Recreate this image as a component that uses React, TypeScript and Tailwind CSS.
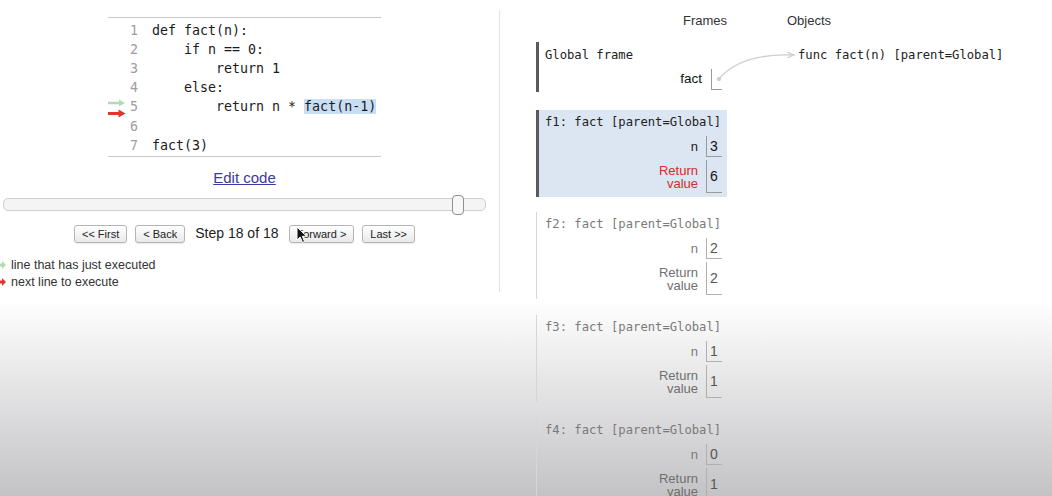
import React from "react"

const mono = "font-['DejaVu_Sans_Mono',monospace]"
const sans = "font-['Liberation_Sans',Arial,sans-serif]"

const code = [
  "def fact(n):",
  "    if n == 0:",
  "        return 1",
  "    else:",
  "        return n * ",
  "",
  "fact(3)",
]

function GreenArrow({ className }: { className?: string }) {
  return (
    <svg width="18" height="8" viewBox="0 0 18 8" className={className}>
      <path d="M0 4 H12" stroke="#b3dbb3" strokeWidth="2.5" />
      <path d="M11 0.5 L17 4 L11 7.5 Z" fill="#b3dbb3" />
    </svg>
  )
}

function RedArrow({ className }: { className?: string }) {
  return (
    <svg width="18" height="9" viewBox="0 0 18 9" className={className}>
      <path d="M0 4.5 H12" stroke="#e3342a" strokeWidth="3" />
      <path d="M10.5 0.5 L17.5 4.5 L10.5 8.5 Z" fill="#e3342a" />
    </svg>
  )
}

function Btn({ children }: { children: React.ReactNode }) {
  return (
    <div className="h-[18px] px-[7px] flex items-center rounded-[3px] border border-[#b5b5b5] bg-[linear-gradient(180deg,#ffffff,#e9e9e9)] text-[11px] text-[#222] shadow-[0_1px_1px_rgba(0,0,0,0.08)]">
      {children}
    </div>
  )
}

type Row = { label: React.ReactNode; value: React.ReactNode; tall?: boolean }

function Frame({
  title,
  rows,
  active,
  muted,
  className,
}: {
  title: string
  rows: Row[]
  active?: boolean
  muted?: boolean
  className?: string
}) {
  const txt = muted ? "text-[#7a7a7a]" : "text-[#222]"
  return (
    <div
      className={`${className ?? ""} ${
        muted ? "border-l border-[#d6d6d6] pl-[8px]" : "border-l-[3px] border-[#5a5a5a] pl-[6px]"
      } ${active ? "bg-[#dbe6f2]" : ""} pt-[4px] pb-[4px] pr-[5px]`}
    >
      <div className={`${mono} text-[12.2px] leading-[16px] whitespace-pre ${txt}`}>{title}</div>
      <div className="flex flex-col items-end gap-[3px] mt-[6px]">
        {rows.map((r, i) => (
          <div key={i} className="flex items-stretch">
            <div
              className={`${sans} text-[13px] leading-[13px] text-right mr-[8px] flex items-center ${
                r.tall ? (active ? "text-[#d52b2b]" : "text-[#6f6f6f]") : txt
              }`}
            >
              {r.label}
            </div>
            <div
              className={`w-[16px] ${r.tall ? "h-[33px]" : "h-[21px]"} border-l border-b ${
                muted ? "border-[#b0b0b0]" : "border-[#9a9a9a]"
              } flex items-center pl-[3px] ${sans} text-[14px] ${muted ? "text-[#555]" : "text-[#111]"}`}
            >
              {r.value}
            </div>
          </div>
        ))}
      </div>
    </div>
  )
}

const retLabel = (
  <span>
    Return
    <br />
    value
  </span>
)

export default function App() {
  return (
    <div className="w-[1052px] h-[496px] overflow-hidden flex bg-[linear-gradient(180deg,#ffffff_0px,#ffffff_300px,#c3c2c5_496px)]">
      {/* left: code + controls */}
      <div className="relative w-[500px] shrink-0 self-start mt-[10px] h-[282px] border-r border-[#e4e4e4]">
        <div className="w-[489px] flex flex-col items-center">
          <div className="w-[273px] mt-[7px] border-t border-b border-[#c8c8c8] pt-[3px] pb-[1px]">
            {code.map((line, i) => (
              <div key={i} className={`flex items-center h-[19.2px] ${mono} text-[13.3px]`}>
                <div className="relative w-[20px] h-full">
                  {i === 4 && (
                    <>
                      <GreenArrow className="absolute left-0 top-[1px]" />
                      <RedArrow className="absolute left-0 top-[11px]" />
                    </>
                  )}
                </div>
                <div className="w-[10px] text-right text-[#9d9d9d]">{i + 1}</div>
                <div className="ml-[14px] whitespace-pre text-[#1a1a1a]">
                  {line}
                  {i === 4 && <span className="bg-[#c8def5]">fact(n-1)</span>}
                </div>
              </div>
            ))}
          </div>

          <a className={`${sans} mt-[12px] text-[15px] leading-[18px] text-[#3a3a9c] underline`}>Edit code</a>

          <div className="relative w-[483px] h-[13px] mt-[11px] rounded-[5px] border border-[#cfcfcf] bg-[#f4f4f4]">
            <div className="absolute left-[448px] top-[-4px] w-[12px] h-[20px] rounded-[4px] border border-[#8f8f8f] bg-[#f7f7f7]" />
          </div>

          <div className={`${sans} flex items-center mt-[12px]`}>
            <Btn>&lt;&lt; First</Btn>
            <div className="ml-[8px]">
              <Btn>&lt; Back</Btn>
            </div>
            <div className="mx-[10px] text-[14px] text-[#222]">Step 18 of 18</div>
            <Btn>Forward &gt;</Btn>
            <div className="ml-[8px]">
              <Btn>Last &gt;&gt;</Btn>
            </div>
          </div>
        </div>

        <div className={`${sans} text-[12.5px] text-[#333] mt-[14px] flex flex-col gap-[3px]`}>
          <div className="flex items-center h-[14px]">
            <svg width="6" height="8" viewBox="0 0 6 8" className="mr-[5px]">
              <path d="M0 2.5 H2 V0 L6 4 L2 8 V5.5 H0 Z" fill="#b3dbb3" />
            </svg>
            line that has just executed
          </div>
          <div className="flex items-center h-[14px]">
            <svg width="6" height="8" viewBox="0 0 6 8" className="mr-[5px]">
              <path d="M0 2.5 H2 V0 L6 4 L2 8 V5.5 H0 Z" fill="#e3342a" />
            </svg>
            next line to execute
          </div>
        </div>

        {/* mouse pointer */}
        <svg width="12" height="18" viewBox="0 0 12 18" className="absolute left-[296px] top-[216px]">
          <path d="M1 1 L1 14 L4.2 11 L6.5 16.5 L8.5 15.6 L6.3 10.3 L10.5 10.3 Z" fill="#111" stroke="#fff" strokeWidth="1" />
        </svg>
      </div>

      {/* right: frames + objects */}
      <div className="relative flex pl-[36px] pt-[13px]">
        <div className="w-[191px]">
          <div className={`${sans} text-[13px] leading-[16px] text-right text-[#333]`}>Frames</div>

          <div className="mt-[13px] border-l-[3px] border-[#5a5a5a] pl-[6px] pt-[5px] pb-[2px] pr-[5px]">
            <div className={`${mono} text-[12.2px] leading-[16px] text-[#222]`}>Global frame</div>
            <div className="flex justify-end items-center mt-[6px]">
              <div className={`${sans} text-[13.5px] text-[#111] mr-[9px]`}>fact</div>
              <div className="w-[11px] h-[21px] border-l border-b border-[#9a9a9a] flex items-center pl-[5px]">
                <div className="w-[4px] h-[4px] rounded-full bg-[#c4c4c4]" />
              </div>
            </div>
          </div>

          <Frame
            className="mt-[18px]"
            active
            title="f1: fact [parent=Global]"
            rows={[
              { label: "n", value: "3" },
              { label: retLabel, value: "6", tall: true },
            ]}
          />
          <Frame
            className="mt-[15px]"
            muted
            title="f2: fact [parent=Global]"
            rows={[
              { label: "n", value: "2" },
              { label: retLabel, value: "2", tall: true },
            ]}
          />
          <Frame
            className="mt-[16px]"
            muted
            title="f3: fact [parent=Global]"
            rows={[
              { label: "n", value: "1" },
              { label: retLabel, value: "1", tall: true },
            ]}
          />
          <Frame
            className="mt-[16px]"
            muted
            title="f4: fact [parent=Global]"
            rows={[
              { label: "n", value: "0" },
              { label: retLabel, value: "1", tall: true },
            ]}
          />
        </div>

        <div className="ml-[60px]">
          <div className={`${sans} text-[13px] leading-[16px] text-[#333]`}>Objects</div>
          <div className={`${mono} text-[12.2px] leading-[16px] text-[#222] mt-[18px] ml-[11px] whitespace-pre`}>
            func fact(n) [parent=Global]
          </div>
        </div>

        {/* pointer from fact to the function object */}
        <svg className="absolute left-0 top-0" width="300" height="100" viewBox="0 0 300 100">
          <path d="M218 80 Q 240 53 293 55" fill="none" stroke="#cfcfcf" strokeWidth="1.3" />
          <path d="M287 52 L294 55 L287 58" fill="none" stroke="#cfcfcf" strokeWidth="1.3" />
        </svg>
      </div>
    </div>
  )
}
